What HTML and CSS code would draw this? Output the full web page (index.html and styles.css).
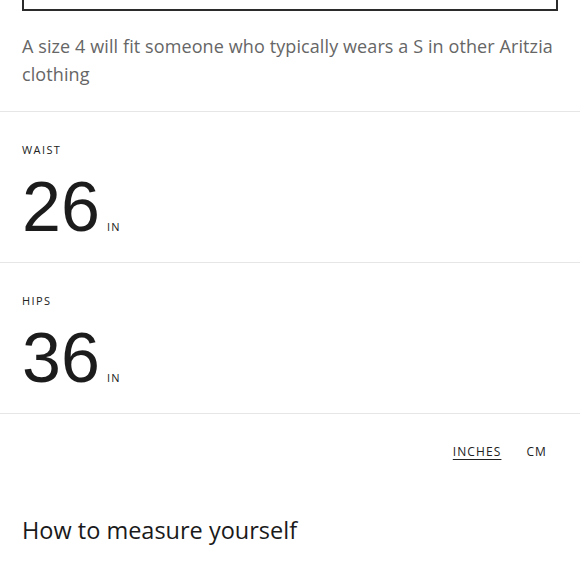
FILE: index.html
```html
<!DOCTYPE html>
<html>
<head>
<meta charset="utf-8">
<link rel="stylesheet" href="styles.css">
</head>
<body>
<div class="select-box"></div>
<p class="fit">A size 4 will fit someone who typically wears a S in other Aritzia clothing</p>
<section class="measure">
  <div class="label">WAIST</div>
  <div class="value"><span class="num">26</span><span class="unit">IN</span></div>
</section>
<section class="measure">
  <div class="label">HIPS</div>
  <div class="value"><span class="num">36</span><span class="unit">IN</span></div>
</section>
<div class="units">
  <a class="unit-link active">INCHES</a>
  <a class="unit-link">CM</a>
</div>
<h2 class="howto">How to measure yourself</h2>
</body>
</html>
```
FILE: styles.css
```css
html, body {
  margin: 0;
  padding: 0;
  background: #fff;
}
body {
  font-family: "Open Sans", "Noto Sans", sans-serif;
  color: #1a1a1a;
  width: 580px;
  overflow: hidden;
}
.select-box {
  margin: 0 22px 0 22px;
  height: 9px;
  border: 2px solid #2b2b2b;
  border-top: 0;
}
.fit {
  margin: 0;
  padding: 21px 22px 23px;
  font-size: 18px;
  line-height: 28px;
  letter-spacing: 0.1px;
  color: #666;
  border-bottom: 1px solid #e6e6e6;
}
.measure {
  padding: 31px 22px 0;
  height: 119px;
  border-bottom: 1px solid #e6e6e6;
}
.label {
  font-size: 11px;
  letter-spacing: 1.4px;
  line-height: 14px;
  color: #222;
}
.value {
  display: flex;
  align-items: baseline;
  margin-top: 8px;
}
.num {
  font-family: "Liberation Sans", Arial, sans-serif;
  font-size: 70px;
  line-height: 84px;
  color: #1c1c1c;
}
.unit {
  font-size: 11px;
  letter-spacing: 1.3px;
  margin-left: 7px;
  color: #222;
}
.units {
  display: flex;
  justify-content: flex-end;
  gap: 25px;
  padding: 30px 33px 0 0;
}
.unit-link {
  font-size: 12px;
  letter-spacing: 1.1px;
  color: #222;
  line-height: 16px;
}
.unit-link.active {
  text-decoration: underline;
  text-underline-offset: 3px;
}
.howto {
  margin: 55px 22px 0;
  font-weight: 400;
  font-size: 23.5px;
  line-height: 30px;
  color: #1a1a1a;
}
```
